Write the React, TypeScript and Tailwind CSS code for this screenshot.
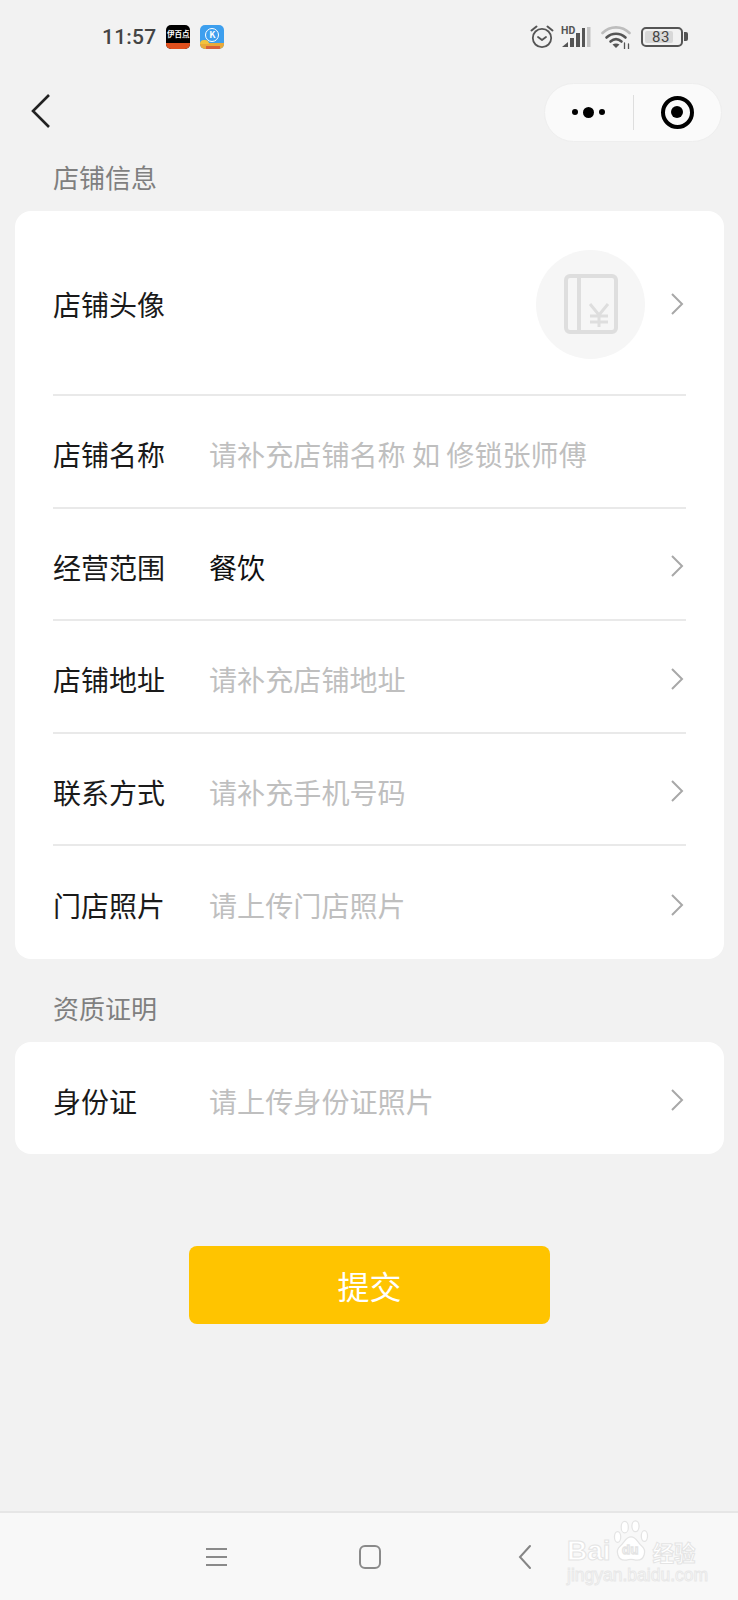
const FONT = "font-['Noto_Sans_CJK_SC','Noto_Sans',sans-serif]"

function StatusBar() {
  return (
    <div className="flex h-[73px] items-center justify-between pl-[102px] pr-[50px]">
      <div className="flex items-center">
        <span className="mt-[2px] font-['Roboto',sans-serif] text-[21px] font-medium leading-none tracking-[0.2px] text-[#444]">11:57</span>
        <div className="ml-[10px] flex h-[24px] w-[24px] flex-col overflow-hidden rounded-[5px] bg-black">
          <div className="flex h-[18px] items-center justify-center text-[7.5px] font-bold leading-none text-white">伊百点</div>
          <div className="h-[6px] bg-[#e0501e]" />
        </div>
        <div className="relative ml-[10px] h-[24px] w-[24px] overflow-hidden rounded-[5px] bg-[#3d9fee]">
          <div className="ml-[5px] mt-[3px] flex h-[14px] w-[14px] items-center justify-center rounded-full border border-white text-[9px] font-bold leading-none text-white">K</div>
          <div className="absolute bottom-0 left-0 h-[6px] w-full bg-[#e9a93a]" />
          <div className="absolute bottom-[5px] left-0 h-[4px] w-[9px] rounded-t-full bg-[#f2c23e]" />
          <div className="absolute bottom-0 left-[6px] h-[3px] w-[14px] bg-[#d8603a]" />
        </div>
      </div>
      <div className="flex items-center">
        <svg width="24" height="25" viewBox="0 0 24 25" fill="none" stroke="#555" strokeWidth="1.8">
          <circle cx="12" cy="14" r="9.2" />
          <path d="M8 13l4 3 4-3" strokeLinecap="round" strokeLinejoin="round" />
          <path d="M1.5 6.5l5-4M22.5 6.5l-5-4" strokeLinecap="round" strokeWidth="2" />
        </svg>
        <svg width="30" height="24" viewBox="0 0 30 24" className="ml-[7px]">
          <text x="0" y="9" fontSize="10.5" fontWeight="700" fill="#555" fontFamily="Roboto, sans-serif">HD</text>
          <path d="M1 22l6-5v5z" fill="#555" />
          <rect x="9" y="13" width="4" height="9" fill="#555" />
          <rect x="15" y="8" width="4" height="14" fill="#555" />
          <rect x="21" y="3" width="3" height="19" fill="#555" />
          <rect x="26" y="2" width="3.5" height="20" fill="#c4c4c4" />
        </svg>
        <svg width="30" height="24" viewBox="0 0 30 24" fill="none" strokeLinecap="round" className="ml-[10px]">
          <path d="M1.5 8c7.500-7.500 19.500-7.500 27 0" stroke="#bdbdbd" strokeWidth="2.6" />
          <path d="M5.500 12.500c5.500-5 13.500-5 19 0" stroke="#555" strokeWidth="2.6" />
          <path d="M9.500 16.500c3.500-3 7.500-3 11 0" stroke="#555" strokeWidth="2.6" />
          <path d="M15 23l-3.500-3.500c2-1.400 5-1.400 7 0z" fill="#555" />
          <path d="M23.500 18v6M27.500 19v5" stroke="#555" strokeWidth="1.300" />
        </svg>
        <div className="ml-[10px] flex items-center">
          <div className="relative flex h-[20px] w-[42px] items-center rounded-[5px] border-2 border-[#555] p-[2px]">
            <div className="h-full w-[28px] rounded-[2px] bg-[#d8d8d8]" />
            <span className="absolute left-[9px] top-0 font-['Roboto',sans-serif] text-[15px] leading-[16px] tracking-[0.5px] text-[#444]">83</span>
          </div>
          <div className="ml-[1px] h-[9px] w-[4px] rounded-r-[2px] bg-[#555]" />
        </div>
      </div>
    </div>
  )
}

function NavBar() {
  return (
    <div className="flex h-[78px] items-center justify-between pl-[31px] pr-[16px]">
      <svg width="20" height="36" viewBox="0 0 20 36" fill="none" stroke="#222" strokeWidth="2.6" className="mt-[-3px]">
        <path d="M18 2L2 18l16 16" />
      </svg>
      <div className="flex h-[59px] w-[178px] items-center rounded-full border border-[#eeeeee] bg-[#fafafa]">
        <div className="flex flex-1 items-center justify-center gap-[5px]">
          <span className="h-[6px] w-[6px] rounded-full bg-black" />
          <span className="h-[11px] w-[11px] rounded-full bg-black" />
          <span className="h-[6px] w-[6px] rounded-full bg-black" />
        </div>
        <div className="h-[35px] w-px bg-[#dedede]" />
        <div className="flex flex-1 items-center justify-center">
          <div className="flex h-[33px] w-[33px] items-center justify-center rounded-full border-[4px] border-black">
            <span className="h-[12px] w-[12px] rounded-full bg-black" />
          </div>
        </div>
      </div>
    </div>
  )
}

function Arrow({ className = '' }: { className?: string }) {
  return (
    <svg width="14" height="24" viewBox="0 0 14 24" fill="none" stroke="#a8a8a8" strokeWidth="2" className={'shrink-0 ' + className}>
      <path d="M2 2l10 10L2 22" />
    </svg>
  )
}

function Row({ label, value, hint, arrow = true, last = false }: { label: string; value?: string; hint?: string; arrow?: boolean; last?: boolean }) {
  return (
    <div className={'flex h-[112.5px] items-center pr-[2px] ' + (last ? '' : 'border-b-2 border-[#e9e9e9]')}>
      <span className="w-[156px] shrink-0 pt-[6px] text-[28px] leading-none text-[#1a1a1a]">{label}</span>
      <span className={'flex-1 pt-[6px] text-[28.1px] leading-none ' + (value ? 'text-[#111]' : 'text-[#bfbfbf]')}>{value ?? hint}</span>
      {arrow && <Arrow className="mt-[5px]" />}
    </div>
  )
}

export default function App() {
  return (
    <div className={'flex h-[1600px] w-[738px] flex-col bg-[#f2f2f2] ' + FONT}>
      <StatusBar />
      <NavBar />
      <div className="flex-1 pl-[15px] pr-[14px]">
        <h2 className="flex h-[60px] items-center pb-[8px] pl-[38px] text-[26px] font-normal leading-none text-[#7f7f7f]">店铺信息</h2>
        <div className="rounded-[16px] bg-white px-[38px]">
          <div className="flex h-[185px] items-center border-b-2 border-[#e9e9e9] pr-[2px]">
            <span className="mt-[2px] flex-1 text-[28px] leading-none text-[#1a1a1a]">店铺头像</span>
            <div className="mr-[25px] mt-[3px] flex h-[109px] w-[109px] items-center justify-center rounded-full bg-[#f6f6f6]">
              <svg width="54" height="60" viewBox="0 0 54 60" fill="none" stroke="#dedede" strokeWidth="4">
                <rect x="2" y="2" width="50" height="56" rx="4" />
                <path d="M15 2v56" />
                <path d="M26 30l9 11 9-11M35 41v12M26 42h18M26 48h18" strokeWidth="3" />
              </svg>
            </div>
            <Arrow className="mt-[3px]" />
          </div>
          <Row label="店铺名称" hint="请补充店铺名称 如 修锁张师傅" arrow={false} />
          <Row label="经营范围" value="餐饮" />
          <Row label="店铺地址" hint="请补充店铺地址" />
          <Row label="联系方式" hint="请补充手机号码" />
          <Row label="门店照片" hint="请上传门店照片" last />
        </div>
        <h2 className="flex h-[83px] items-center pl-[38px] pt-[15px] text-[26px] font-normal leading-none text-[#7f7f7f]">资质证明</h2>
        <div className="rounded-[16px] bg-white px-[38px]">
          <Row label="身份证" hint="请上传身份证照片" last />
        </div>
        <div className="mt-[92px] flex justify-center">
          <button className="h-[78px] w-[361px] rounded-[8px] bg-[#ffc400] text-[32px] text-white">提交</button>
        </div>
      </div>
      <div className="relative flex h-[89px] items-center border-t-2 border-[#e6e6e6] bg-[#f8f8f8]">
        <div className="ml-[206px] flex w-[21px] flex-col gap-[6px]">
          <span className="h-[2px] bg-[#8a8a8a]" />
          <span className="h-[2px] bg-[#8a8a8a]" />
          <span className="h-[2px] bg-[#8a8a8a]" />
        </div>
        <div className="ml-[132px] h-[24px] w-[22px] rounded-[6px] border-2 border-[#8a8a8a]" />
        <svg width="14" height="26" viewBox="0 0 14 26" fill="none" stroke="#858585" strokeWidth="2" className="ml-[137px]">
          <path d="M12 2L2 13l10 11" strokeLinecap="round" />
        </svg>
        <div className="absolute left-[567px] top-[7px] w-[132px] font-['Liberation_Sans',sans-serif] text-white">
          <div className="flex h-[42px] items-end">
            <span className="text-[28px] font-bold leading-[22px] [-webkit-text-stroke:1px_#e4e4e4]">Bai</span>
            <svg width="40" height="42" viewBox="0 0 40 47" fill="#ffffff" stroke="#e4e4e4" strokeWidth="1.400" className="shrink-0">
              <ellipse cx="13" cy="8" rx="4" ry="6.500" />
              <ellipse cx="25" cy="7" rx="4" ry="6" />
              <ellipse cx="35" cy="18" rx="3.500" ry="6" />
              <ellipse cx="5" cy="19" rx="3.500" ry="6" />
              <path d="M20 19c-6 0-7 6-12 10-6 5-3 16 5 16 3 0 5-1 7-1s4 1 7 1c8 0 11-11 5-16-5-4-6-10-12-10z" />
              <text x="10" y="38" fontSize="15" fontWeight="700" fill="#ffffff">du</text>
            </svg>
            <span className={'ml-[2px] text-[21.500px] font-bold leading-[21px] [-webkit-text-stroke:1px_#e4e4e4] ' + FONT}>经验</span>
          </div>
          <div className="mt-[5px] whitespace-nowrap text-[17.500px] leading-[16px] [-webkit-text-stroke:1px_#e8e8e8]">jingyan.baidu.com</div>
        </div>
      </div>
    </div>
  )
}
